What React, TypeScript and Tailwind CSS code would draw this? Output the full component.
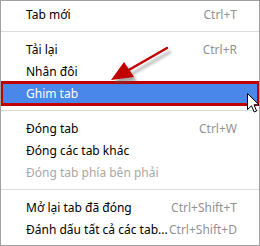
import React from 'react';

type Item =
  | { kind: 'item'; label: string; shortcut?: string; disabled?: boolean; active?: boolean }
  | { kind: 'sep' };

const ITEMS: Item[] = [
  { kind: 'item', label: 'Tab mới', shortcut: 'Ctrl+T' },
  { kind: 'sep' },
  { kind: 'item', label: 'Tải lại', shortcut: 'Ctrl+R' },
  { kind: 'item', label: 'Nhân đôi' },
  { kind: 'item', label: 'Ghim tab', active: true },
  { kind: 'sep' },
  { kind: 'item', label: 'Đóng tab', shortcut: 'Ctrl+W' },
  { kind: 'item', label: 'Đóng các tab khác' },
  { kind: 'item', label: 'Đóng tab phía bên phải', disabled: true },
  { kind: 'sep' },
  { kind: 'item', label: 'Mở lại tab đã đóng', shortcut: 'Ctrl+Shift+T' },
  { kind: 'item', label: 'Đánh dấu tất cả các tab...', shortcut: 'Ctrl+Shift+D' },
];

function Arrow() {
  return (
    <svg className="absolute left-0 top-0 pointer-events-none" width="260" height="246" viewBox="0 0 260 246">
      <defs>
        <filter id="blur" x="-20%" y="-20%" width="140%" height="140%">
          <feGaussianBlur stdDeviation="1.5" />
        </filter>
      </defs>
      {/* shadow */}
      <g transform="translate(3 4)" filter="url(#blur)" opacity="0.5">
        <line x1="166" y1="47" x2="126" y2="70" stroke="#555" strokeWidth="2.5" strokeLinecap="round" />
        <polygon points="110,79 123,61 133,76" fill="#555" />
      </g>
      <line x1="166" y1="47" x2="126" y2="70" stroke="#c00000" strokeWidth="2.5" strokeLinecap="round" />
      <polygon points="110,79 123,61 133,76" fill="#c00000" />
    </svg>
  );
}

function Cursor() {
  return (
    <svg className="absolute left-[246px] top-[92px] pointer-events-none" width="14" height="21" viewBox="0 0 14 21">
      <path
        d="M0.5 0.5 L0.5 16.5 L4.5 12.8 L7.2 19 L9.6 18 L7 11.8 L12 11.8 Z"
        fill="#fff"
        stroke="#000"
        strokeWidth="1"
        strokeLinejoin="miter"
      />
    </svg>
  );
}

export default function App() {
  return (
    <div className="relative w-[260px] h-[246px] bg-white border border-[#a0a0a0] pt-[2px] font-['Noto_Sans','Open_Sans',sans-serif] text-[12px] leading-none overflow-hidden">
      {ITEMS.map((it, i) =>
        it.kind === 'sep' ? (
          <div key={i} className="h-[13px] flex items-center">
            <div className="h-px w-full bg-[#dcdcdc]" />
          </div>
        ) : (
          <div
            key={i}
            className={`relative h-[22px] flex items-center justify-between pl-[25px] pr-[22px] pt-[2px] ${
              it.active ? 'bg-[#4a87ea] text-white' : it.disabled ? 'text-[#a8a8a8]' : 'text-black'
            }`}
          >
            <span>{it.label}</span>
            {it.shortcut && <span className="text-[#929292]">{it.shortcut}</span>}
            {it.active && (
              <div className="absolute -left-px -right-px -top-[1px] -bottom-[2px] border-[3px] border-[#c00000]" />
            )}
          </div>
        )
      )}
      <Arrow />
      <Cursor />
    </div>
  );
}
